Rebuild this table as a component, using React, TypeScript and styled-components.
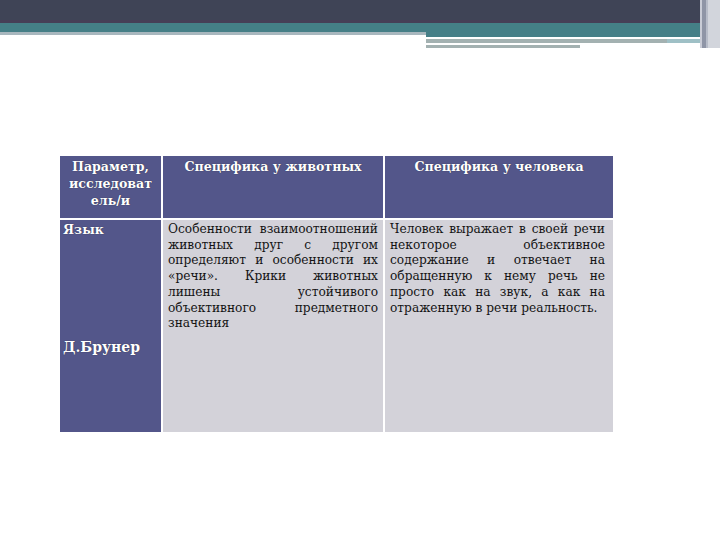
import styled, { createGlobalStyle } from "styled-components";

const serif = `"DejaVu Serif", "Liberation Serif", serif`;

const Global = createGlobalStyle`
  html, body {
    margin: 0;
    padding: 0;
    background: #ffffff;
  }
  body {
    width: 720px;
    height: 540px;
    overflow: hidden;
    font-family: ${serif};
  }
`;

const Page = styled.div`
  width: 720px;
  height: 540px;
  display: flex;
  flex-direction: column;
  font-family: ${serif};
`;

/* slide template decoration on top */
const Banner = styled.div`
  display: flex;
  height: 50px;
`;

const BannerMain = styled.div`
  flex: 1;
  display: flex;
  flex-direction: column;
`;

const DarkBar = styled.div`
  height: 20px;
  background: #3f4456;
  border-bottom: 3px solid #463f57;
`;

const TealBar = styled.div`
  height: 9px;
  background: #457f87;
`;

const Underline = styled.div`
  display: flex;
`;

const LeftLine = styled.div`
  width: 426px;
  height: 3px;
  background: #a8b7be;
`;

const RightDeco = styled.div`
  flex: 1;
  display: flex;
  flex-direction: column;
`;

const DecoStripe = styled.div<{ $h: number; $color: string; $w?: number; $mt?: number }>`
  height: ${({ $h }) => $h}px;
  width: ${({ $w }) => ($w ? `${$w}px` : "auto")};
  margin-top: ${({ $mt }) => $mt ?? 0}px;
  background: ${({ $color }) => $color};
`;

const GreyRule = styled.div`
  display: flex;
  height: 4px;
`;

const GreyRuleMain = styled.div`
  width: 241px;
  background: #a3b1b1;
`;

const GreyRuleTail = styled.div`
  flex: 1;
  background: #9fc0c6;
`;

const EdgeStrip = styled.div`
  width: 20px;
  height: 48px;
  display: flex;
`;

const EdgeLine = styled.div<{ $w: number; $color: string }>`
  width: ${({ $w }) => $w}px;
  background: ${({ $color }) => $color};
`;

/* table */
const TableWrap = styled.div`
  margin: 106px 0 0 60px;
  display: grid;
  grid-template-columns: 101px 220px 228px;
  grid-template-rows: 62px 212px;
  gap: 2px;
`;

const HeadCell = styled.div`
  background: #53568a;
  color: #ffffff;
  font-family: ${serif};
  font-weight: bold;
  font-size: 12.6px;
  line-height: 17px;
  text-align: center;
  padding: 2px 2px;
  text-shadow: 0 0 1px rgba(0, 0, 0, 0.6);
`;

const SideCell = styled.div`
  background: #53568a;
  color: #ffffff;
  font-family: ${serif};
  font-weight: bold;
  font-size: 12.6px;
  line-height: 16px;
  padding: 2px 3px;
  display: flex;
  flex-direction: column;
  text-shadow: 0 0 1px rgba(0, 0, 0, 0.6);
`;

const Author = styled.div`
  margin-top: 101px;
  font-size: 14px;
`;

const BodyCell = styled.div<{ $pr: number }>`
  background: #d3d2d9;
  color: #141414;
  font-family: ${serif};
  font-size: 12.2px;
  line-height: 15.7px;
  text-align: justify;
  padding: 2px ${({ $pr }) => $pr}px 0 5px;
`;

export default function App() {
  return (
    <Page>
      <Global />
      <Banner>
        <BannerMain>
          <DarkBar />
          <TealBar />
          <Underline>
            <LeftLine />
            <RightDeco>
              <DecoStripe $h={5} $color="#457f87" />
              <DecoStripe $h={2} $color="#ffffff" />
              <GreyRule>
                <GreyRuleMain />
                <GreyRuleTail />
              </GreyRule>
              <DecoStripe $h={3} $w={154} $mt={2} $color="#a3b1b1" />
            </RightDeco>
          </Underline>
        </BannerMain>
        <EdgeStrip>
          <EdgeLine $w={2} $color="#c9ccd6" />
          <EdgeLine $w={4} $color="#8f95a6" />
          <EdgeLine $w={2} $color="#b7bcc8" />
          <EdgeLine $w={12} $color="#d2d5dc" />
        </EdgeStrip>
      </Banner>

      <TableWrap>
        <HeadCell>
          Параметр,
          <br />
          исследоват
          <br />
          ель/и
        </HeadCell>
        <HeadCell>Специфика у животных</HeadCell>
        <HeadCell>Специфика у человека</HeadCell>

        <SideCell>
          <span>Язык</span>
          <Author>Д.Брунер</Author>
        </SideCell>
        <BodyCell $pr={5}>
          Особенности взаимоотношений животных друг с другом определяют и
          особенности их «речи». Крики животных лишены устойчивого
          объективного предметного значения
        </BodyCell>
        <BodyCell $pr={8}>
          Человек выражает в своей речи некоторое объективное содержание и
          отвечает на обращенную к нему речь не просто как на звук, а как на
          отраженную в речи реальность.
        </BodyCell>
      </TableWrap>
    </Page>
  );
}
